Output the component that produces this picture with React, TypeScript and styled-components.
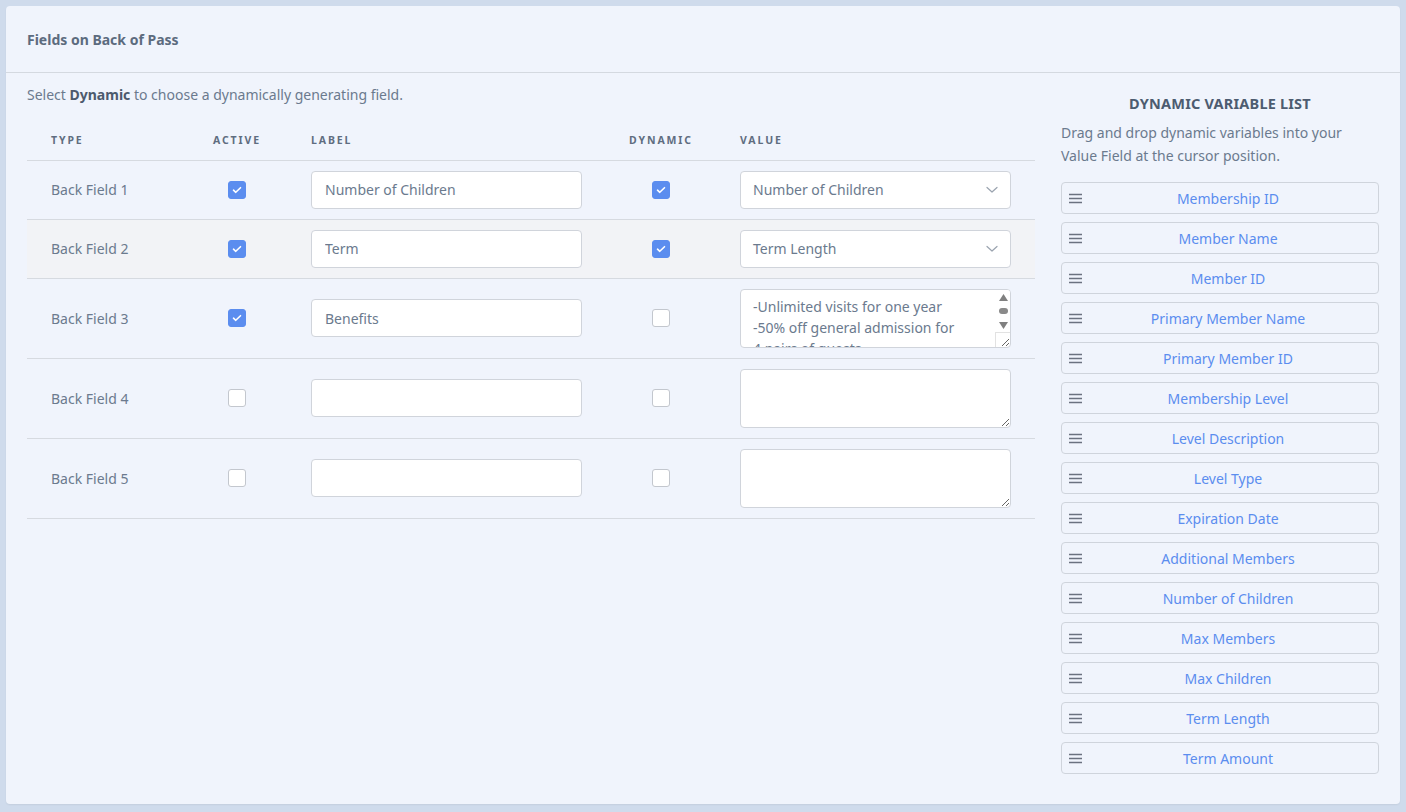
import styled, { createGlobalStyle } from 'styled-components';

const GlobalStyle = createGlobalStyle`
  html, body {
    margin: 0;
    padding: 0;
    background: #cfdbec;
  }
  body {
    font-family: "Noto Sans", "Open Sans", Arial, sans-serif;
    -webkit-font-smoothing: antialiased;
  }
  * {
    box-sizing: border-box;
  }
`;

const Page = styled.div`
  padding: 6px;
  min-height: 812px;
`;

const Card = styled.div`
  background: #f0f4fc;
  border-radius: 4px;
  box-shadow: 0 1px 2px rgb(0 0 0 / 0.06);
  height: 798px;
  display: flex;
  flex-direction: column;
`;

const CardHeader = styled.div`
  height: 67px;
  padding: 0 21px;
  display: flex;
  align-items: center;
  border-bottom: 1px solid #d4d9e0;
  font-size: 14px;
  font-weight: 700;
  color: #5c6b7e;
`;

const CardBody = styled.div`
  display: flex;
  gap: 26px;
  padding: 0 21px;
`;

const Main = styled.div`
  width: 1008px;
`;

const Intro = styled.p`
  margin: 0;
  height: 46px;
  padding-top: 12px;
  font-size: 14px;
  line-height: 20px;
  color: #6b7a8e;

  > b {
    color: #4c5a6d;
  }
`;

const columns = '162px 96px 321px 110px 319px';

const HeadRow = styled.div`
  display: grid;
  grid-template-columns: ${columns};
  height: 42px;
  align-items: center;
  border-bottom: 1px solid #d6dae0;
`;

type CellProps = { $center?: boolean; $pad?: number };

const HeadCell = styled.div<CellProps>`
  font-size: 10.5px;
  font-weight: 700;
  letter-spacing: 1.9px;
  color: #5f6d80;
  text-align: ${(p) => (p.$center ? 'center' : 'left')};
  padding-left: ${(p) => (p.$center ? 0 : p.$pad ?? 0)}px;
`;

const Row = styled.div<{ $height: number; $shaded?: boolean }>`
  display: grid;
  grid-template-columns: ${columns};
  height: ${(p) => p.$height}px;
  align-items: center;
  border-bottom: 1px solid #d6dae0;
  background: ${(p) => (p.$shaded ? '#f2f3f6' : 'transparent')};
`;

const Cell = styled.div<CellProps>`
  display: flex;
  justify-content: ${(p) => (p.$center ? 'center' : 'flex-start')};
  padding-left: ${(p) => p.$pad ?? 0}px;
  padding-bottom: 1px;
  font-size: 14px;
  color: #6b7a8e;
`;

const Box = styled.span<{ $checked?: boolean }>`
  width: 18px;
  height: 18px;
  border-radius: 3px;
  display: flex;
  align-items: center;
  justify-content: center;
  background: ${(p) => (p.$checked ? '#5b8def' : '#fff')};
  border: 1px solid ${(p) => (p.$checked ? '#5b8def' : '#c3c7ce')};
`;

const TextInput = styled.input`
  width: 271px;
  height: 38px;
  border: 1px solid #d0d4db;
  border-radius: 4px;
  background: #fff;
  padding: 0 13px;
  font: inherit;
  font-size: 14px;
  color: #6b7a8e;
  outline: none;
`;

const SelectBox = styled.div`
  width: 271px;
  height: 38px;
  border: 1px solid #d0d4db;
  border-radius: 4px;
  background: #fff;
  padding: 0 12px;
  display: flex;
  align-items: center;
  justify-content: space-between;
  font-size: 14px;
  color: #6b7a8e;
`;

const AreaWrap = styled.div`
  position: relative;
  width: 271px;
`;

const TextArea = styled.textarea<{ $scroll?: boolean }>`
  width: 271px;
  height: 59px;
  border: 1px solid #d0d4db;
  border-radius: 4px;
  background: #fff;
  padding: 6px ${(p) => (p.$scroll ? 20 : 12)}px 6px 12px;
  font: inherit;
  font-size: 14px;
  line-height: 21px;
  color: #6b7a8e;
  outline: none;
  resize: vertical;
  display: block;
  overflow: hidden;
`;

/* fake classic scrollbar drawn over the textarea */
const ScrollTrack = styled.div`
  position: absolute;
  top: 1px;
  right: 1px;
  width: 14px;
  height: 42px;
  background: #fff;
  display: flex;
  flex-direction: column;
  align-items: center;
  justify-content: space-between;
  padding: 4px 0 3px;
  border-top-right-radius: 3px;
`;

const Thumb = styled.span`
  width: 9px;
  height: 6px;
  border-radius: 3px;
  background: #8a8a8a;
`;

const ScrollCorner = styled.div`
  position: absolute;
  right: 1px;
  bottom: 1px;
  width: 15px;
  height: 15px;
  border-top: 1px solid #e2e2e2;
  border-left: 1px solid #e2e2e2;
  pointer-events: none;
`;

const Side = styled.div`
  width: 318px;
`;

const SideTitle = styled.h3`
  margin: 0;
  padding-top: 21px;
  height: 48px;
  font-size: 14.5px;
  font-weight: 700;
  letter-spacing: 0.2px;
  line-height: 18px;
  color: #4d5c70;
  text-align: center;
`;

const SideText = styled.p`
  margin: 0 0 15px;
  font-size: 14px;
  line-height: 23px;
  color: #6b7a8e;
`;

const VarList = styled.div`
  display: flex;
  flex-direction: column;
  gap: 8px;
`;

const VarItem = styled.div`
  height: 32px;
  border: 1px solid #cfd4dc;
  border-radius: 4px;
  display: flex;
  align-items: center;
  padding-left: 7px;
  cursor: grab;
`;

const VarName = styled.span`
  flex: 1;
  text-align: center;
  font-size: 14px;
  color: #5b8def;
  padding-right: 4px;
`;

function Check() {
  return (
    <svg width="10" height="8" viewBox="0 0 10 8" fill="none">
      <path d="M1.5 4.2 L3.8 6.3 L8.5 1.7" stroke="#fff" strokeWidth="1.6" strokeLinecap="round" strokeLinejoin="round" />
    </svg>
  );
}

function Chevron() {
  return (
    <svg width="12" height="8" viewBox="0 0 12 8" fill="none">
      <path d="M1 1.5 L6 6 L11 1.5" stroke="#9aa3af" strokeWidth="1.2" strokeLinecap="round" strokeLinejoin="round" />
    </svg>
  );
}

function Arrow({ down }: { down?: boolean }) {
  return (
    <svg width="9" height="7" viewBox="0 0 9 7">
      <path d={down ? 'M0 0 H9 L4.5 7 Z' : 'M4.5 0 L9 7 H0 Z'} fill="#808080" />
    </svg>
  );
}

function Handle() {
  return (
    <svg width="13" height="11" viewBox="0 0 13 11" fill="none">
      <path d="M0 1.5 H13 M0 5.5 H13 M0 9.5 H13" stroke="#6b7280" strokeWidth="1.6" />
    </svg>
  );
}

type Field = {
  name: string;
  active: boolean;
  label: string;
  dynamic: boolean;
  value: string;
};

const fields: Field[] = [
  { name: 'Back Field 1', active: true, label: 'Number of Children', dynamic: true, value: 'Number of Children' },
  { name: 'Back Field 2', active: true, label: 'Term', dynamic: true, value: 'Term Length' },
  {
    name: 'Back Field 3',
    active: true,
    label: 'Benefits',
    dynamic: false,
    value: '-Unlimited visits for one year\n-50% off general admission for\n4 pairs of guests\n-10% off at the gift shop',
  },
  { name: 'Back Field 4', active: false, label: '', dynamic: false, value: '' },
  { name: 'Back Field 5', active: false, label: '', dynamic: false, value: '' },
];

const variables = [
  'Membership ID',
  'Member Name',
  'Member ID',
  'Primary Member Name',
  'Primary Member ID',
  'Membership Level',
  'Level Description',
  'Level Type',
  'Expiration Date',
  'Additional Members',
  'Number of Children',
  'Max Members',
  'Max Children',
  'Term Length',
  'Term Amount',
];

function ValueArea({ value }: { value: string }) {
  const scroll = value.length > 0;
  return (
    <AreaWrap>
      <TextArea defaultValue={value} $scroll={scroll} />
      {scroll ? (
        <>
          <ScrollTrack>
            <Arrow />
            <Thumb />
            <Arrow down />
          </ScrollTrack>
          <ScrollCorner />
        </>
      ) : null}
    </AreaWrap>
  );
}

export default function App() {
  return (
    <>
      <GlobalStyle />
      <Page>
        <Card>
          <CardHeader>Fields on Back of Pass</CardHeader>
          <CardBody>
            <Main>
              <Intro>
                Select <b>Dynamic</b> to choose a dynamically generating field.
              </Intro>
              <HeadRow>
                <HeadCell $pad={24}>TYPE</HeadCell>
                <HeadCell $center>ACTIVE</HeadCell>
                <HeadCell $pad={26}>LABEL</HeadCell>
                <HeadCell $center>DYNAMIC</HeadCell>
                <HeadCell $pad={24}>VALUE</HeadCell>
              </HeadRow>
              {fields.map((f, i) => (
                <Row key={f.name} $height={f.dynamic ? 59 : 80} $shaded={i === 1}>
                  <Cell $pad={24}>{f.name}</Cell>
                  <Cell $center>
                    <Box $checked={f.active}>{f.active ? <Check /> : null}</Box>
                  </Cell>
                  <Cell $pad={26}>
                    <TextInput defaultValue={f.label} />
                  </Cell>
                  <Cell $center>
                    <Box $checked={f.dynamic}>{f.dynamic ? <Check /> : null}</Box>
                  </Cell>
                  <Cell $pad={24}>
                    {f.dynamic ? (
                      <SelectBox>
                        <span>{f.value}</span>
                        <Chevron />
                      </SelectBox>
                    ) : (
                      <ValueArea value={f.value} />
                    )}
                  </Cell>
                </Row>
              ))}
            </Main>
            <Side>
              <SideTitle>DYNAMIC VARIABLE LIST</SideTitle>
              <SideText>
                Drag and drop dynamic variables into your Value Field at the cursor position.
              </SideText>
              <VarList>
                {variables.map((v) => (
                  <VarItem key={v}>
                    <Handle />
                    <VarName>{v}</VarName>
                  </VarItem>
                ))}
              </VarList>
            </Side>
          </CardBody>
        </Card>
      </Page>
    </>
  );
}
